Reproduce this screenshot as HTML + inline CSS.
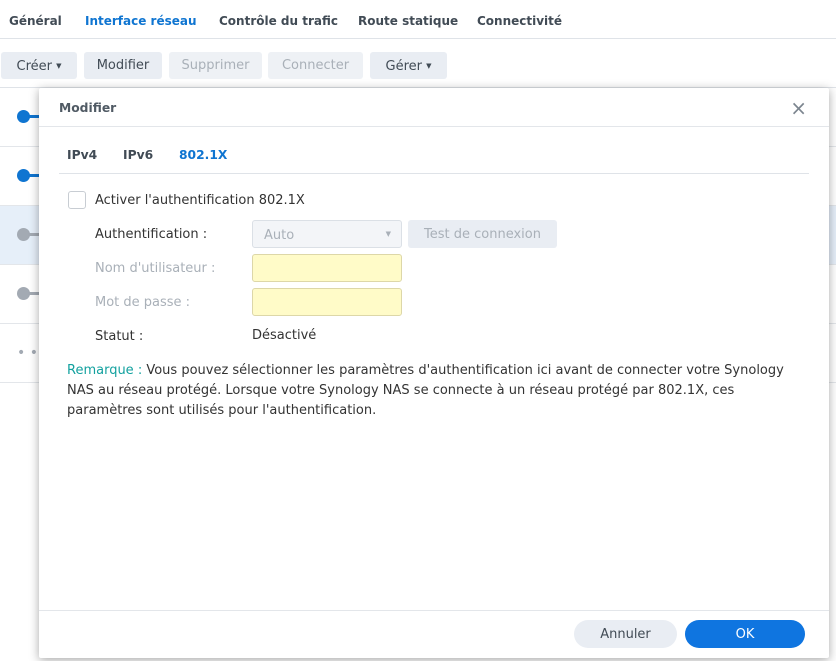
<!DOCTYPE html><html><head><meta charset="utf-8"><style>
*{box-sizing:border-box;margin:0;padding:0}
body{width:836px;height:661px;overflow:hidden;background:#fff;font-family:"DejaVu Sans",sans-serif;font-size:13px;color:#333;position:relative}
.a{position:absolute;white-space:nowrap}
.tab{font-weight:bold;font-size:12px;color:#414b55;top:14px}
.btn{top:52px;height:27px;background:#e9edf3;border-radius:3px;color:#414b55;line-height:27px;text-align:center;font-size:13px}
.dis{color:#a9b0b8;background:#eef1f5}
.row{left:0;height:1px;background:#e3e6ea}
.dot{width:13px;height:13px;border-radius:50%}
</style></head><body>
<div class="a tab" style="left:9px">Général</div>
<div class="a tab" style="left:85px;color:#0f75d1">Interface réseau</div>
<div class="a tab" style="left:219px">Contrôle du trafic</div>
<div class="a tab" style="left:358px">Route statique</div>
<div class="a tab" style="left:477px">Connectivité</div>
<div class="a" style="left:0;top:38px;width:836px;height:1px;background:#dfe3e8"></div>
<div class="a btn" style="left:1px;width:76px;line-height:28px">Créer <span style="font-size:7px;vertical-align:2px">▼</span></div>
<div class="a btn" style="left:84px;width:78px;line-height:28px">Modifier</div>
<div class="a btn dis" style="left:169px;width:93px;line-height:28px">Supprimer</div>
<div class="a btn dis" style="left:268px;width:95px;line-height:28px">Connecter</div>
<div class="a btn" style="left:370px;width:77px;line-height:28px">Gérer <span style="font-size:7px;vertical-align:2px">▼</span></div>
<div class="a" style="left:0;top:87px;width:836px;height:1px;background:#dfe3e8"></div>
<div class="a" style="left:0;top:206px;width:836px;height:58px;background:#e6eff9"></div>
<div class="a row" style="top:146px;width:836px"></div><div class="a row" style="top:205px;width:836px"></div><div class="a row" style="top:264px;width:836px"></div><div class="a row" style="top:323px;width:836px"></div><div class="a row" style="top:382px;width:836px"></div>
<div class="a dot" style="left:17px;top:110px;background:#0f75d1"></div><div class="a" style="left:26px;top:115px;width:14px;height:3px;background:#0f75d1"></div>
<div class="a dot" style="left:17px;top:169px;background:#0f75d1"></div><div class="a" style="left:26px;top:174px;width:14px;height:3px;background:#0f75d1"></div>
<div class="a dot" style="left:17px;top:228px;background:#a3aab3"></div><div class="a" style="left:26px;top:233px;width:14px;height:3px;background:#a3aab3"></div>
<div class="a dot" style="left:17px;top:287px;background:#a3aab3"></div><div class="a" style="left:26px;top:292px;width:14px;height:3px;background:#a3aab3"></div>
<div class="a" style="left:17px;top:345px;color:#a3aab3;font-size:14px">• •</div>
<div class="a" style="left:39px;top:88px;width:790px;height:570px;background:#fff;box-shadow:0 2px 10px rgba(0,0,0,.35);border-radius:2px">
<div class="a" style="left:20px;top:13px;font-weight:bold;font-size:12.3px;color:#505a64">Modifier</div>
<div class="a" style="right:22px;top:8px;font-size:20px;color:#7c858f">×</div>
<div class="a" style="left:0;top:38px;width:790px;height:1px;background:#e3e6ea"></div>
<div class="a" style="left:28px;top:60px;font-weight:bold;font-size:12.3px;color:#414b55">IPv4</div>
<div class="a" style="left:84px;top:60px;font-weight:bold;font-size:12.3px;color:#414b55">IPv6</div>
<div class="a" style="left:140px;top:60px;font-weight:bold;font-size:12.3px;color:#0f75d1">802.1X</div>
<div class="a" style="left:20px;top:85px;width:750px;height:1px;background:#dfe3e8"></div>
<div class="a" style="left:29px;top:103px;width:18px;height:18px;border:1px solid #c8cdd3;border-radius:3px"></div>
<div class="a" style="left:56px;top:105px">Activer l'authentification 802.1X</div>
<div class="a" style="left:56px;top:139px">Authentification :</div>
<div class="a" style="left:56px;top:173px;color:#a9b0b8">Nom d'utilisateur :</div>
<div class="a" style="left:56px;top:207px;color:#a9b0b8">Mot de passe :</div>
<div class="a" style="left:56px;top:241px">Statut :</div>
<div class="a" style="left:213px;top:132px;width:150px;height:28px;border:1px solid #dbe0e6;border-radius:3px;background:#f3f5f8;color:#a9b0b8;padding:7px 11px">Auto<span style="position:absolute;right:10px;top:9px;font-size:7px">▼</span></div>
<div class="a" style="left:369px;top:132px;width:149px;height:28px;border-radius:3px;background:#e9edf3;color:#a9b0b8;line-height:30px;text-align:center">Test de connexion</div>
<div class="a" style="left:213px;top:166px;width:150px;height:28px;border:1px solid #ddd7a8;border-radius:3px;background:#fffbc8"></div>
<div class="a" style="left:213px;top:200px;width:150px;height:28px;border:1px solid #ddd7a8;border-radius:3px;background:#fffbc8"></div>
<div class="a" style="left:213px;top:240px">Désactivé</div>
<div class="a" style="left:28px;top:273px;width:740px;line-height:20px;white-space:normal"><span style="color:#13a19f">Remarque :</span> Vous pouvez sélectionner les paramètres d'authentification ici avant de connecter votre Synology NAS au réseau protégé. Lorsque votre Synology NAS se connecte à un réseau protégé par 802.1X, ces paramètres sont utilisés pour l'authentification.</div>
<div class="a" style="left:0;top:522px;width:790px;height:1px;background:#e3e6ea"></div>
<div class="a" style="left:535px;top:532px;width:103px;height:28px;border-radius:14px;background:#e9edf3;color:#414b55;line-height:30px;text-align:center">Annuler</div>
<div class="a" style="left:646px;top:532px;width:120px;height:28px;border-radius:14px;background:#0f75e0;color:#fff;line-height:30px;text-align:center">OK</div>
</div>
</body></html>
